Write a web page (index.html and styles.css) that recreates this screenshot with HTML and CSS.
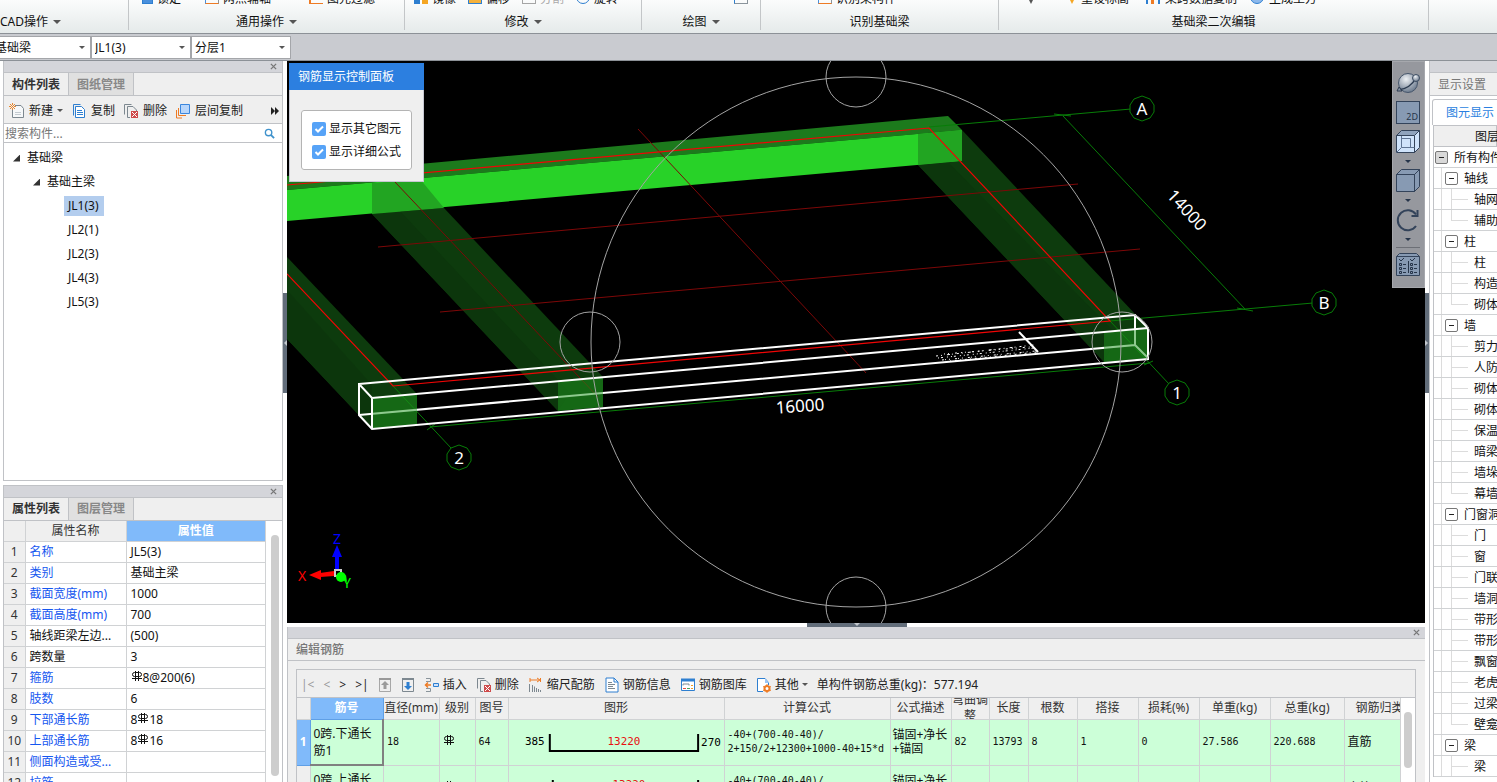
FILE: index.html
```html
<!DOCTYPE html>
<html lang="zh-CN">
<head>
  <meta charset="UTF-8">
  <title>基础梁 - 钢筋三维</title>
  <link rel="stylesheet" href="styles.css">
</head>
<body>
  <!-- 公用图标 -->
  <svg class="defs" aria-hidden="true">
    <symbol id="i-rebar" viewBox="0 0 12 12"><path d="M4.500 1v10M7.500 1v10M1 8.500h10" fill="none" stroke="#111"/><rect x="1.500" y="2.500" width="9" height="4" rx="2" fill="none" stroke="#111"/></symbol>
    <symbol id="i-new" viewBox="0 0 16 16"><path d="M6 2.500h6l2.500 3v9h-11V7" fill="#f6f8f9" stroke="#7d8890"/><path d="M6 9.500h6M6 11.500h6" stroke="#c3cad0"/><path d="M1 1l5 5M6 1L1 6M3.500 0v2M3.500 5v2M0 3.500h2M5 3.500h2" stroke="#e8862c"/></symbol>
    <symbol id="i-copy" viewBox="0 0 16 16"><path d="M2.500 12.500v-11h7" fill="none" stroke="#2e7fd0"/><path d="M4.500 3.500h6l3 3v8h-9z" fill="#fff" stroke="#2e7fd0"/><path d="M6 7.500h5M6 9.500h6M6 11.500h6" stroke="#2e7fd0"/></symbol>
    <symbol id="i-del" viewBox="0 0 16 16"><path d="M1.500 11.500v-10h7" fill="none" stroke="#7d8890"/><path d="M7 14.500H4.500v-11H10l3.500 3.500v1" fill="none" stroke="#7d8890"/><path d="M8 8h7v7H8z" fill="#cf4b4b"/><path d="M9 9l5 5M14 9l-5 5" stroke="#fff"/></symbol>
    <symbol id="i-layer" viewBox="0 0 16 16"><path d="M5.500 1.500h9v9h-9z" fill="#b8d6fb" stroke="#3a86dd"/><path d="M3.500 5v7.500H11M1.500 7v8H7" fill="none" stroke="#ee7b24"/></symbol>
    <symbol id="i-search" viewBox="0 0 12 12"><circle cx="5" cy="5" r="3.500" fill="none" stroke="#3f92cc" stroke-width="1.500"/><path d="M7.500 7.500L11 11" stroke="#3f92cc" stroke-width="2"/></symbol>
    <symbol id="i-x" viewBox="0 0 8 8"><path d="M1 1l6 6M7 1L1 7" stroke="#777" stroke-width="1.500"/></symbol>
    <symbol id="i-up" viewBox="0 0 14 14"><path d="M1.500 1.500h11v12h-11z" fill="none" stroke="#a7a7a7"/><path d="M7 3l4 4H8.500v4h-3V7H3z" fill="#9b9b9b"/><path d="M1 1h12" stroke="#999" stroke-width="2"/></symbol>
    <symbol id="i-down" viewBox="0 0 14 14"><path d="M1.500 1.500h11v12h-11z" fill="none" stroke="#7d8890"/><path d="M7 12l4-4H8.500V4h-3v4H3z" fill="#2e7fd0"/><path d="M1 1h12" stroke="#7d8890" stroke-width="2"/></symbol>
    <symbol id="i-insert" viewBox="0 0 16 16"><path d="M2 1.500h4.500v3H2M2 11.500h4.500v3H2" fill="none" stroke="#8a949b"/><path d="M9.500 6.500h5v3h-5z" fill="#cfe2fb" stroke="#2e7fd0"/><path d="M7 8H2M4 5.500L1.500 8 4 10.500" fill="none" stroke="#ee7b24" stroke-width="1.500"/></symbol>
    <symbol id="i-scale" viewBox="0 0 16 16"><path d="M2 1v4M2 3h9M9 1l3 2-3 2M12.500 1v4" fill="none" stroke="#ee7b24"/><path d="M1.500 7v8M4.500 8v7M6.500 9.500V15M8.500 11v4M10.500 12v3M12.500 13v2" stroke="#7d8890"/></symbol>
    <symbol id="i-info" viewBox="0 0 16 16"><path d="M2 1h8l4 4v10H2z" fill="#fff" stroke="#2e7fd0"/><path d="M10 1v4h4" fill="none" stroke="#2e7fd0"/><path d="M4 5.500h4M4 7.500h7M4 9.500h5M4 11.500h7" stroke="#7d8890"/></symbol>
    <symbol id="i-lib" viewBox="0 0 16 16"><path d="M1.500 2.500h13v11h-13z" fill="#fff" stroke="#2e7fd0"/><path d="M1 3h14" stroke="#2e7fd0" stroke-width="3"/><path d="M3 8.500V7h6v1.500" fill="none" stroke="#7d8890"/><path d="M3 11.500h3" stroke="#e0504a"/><path d="M7 11.500h3" stroke="#46a35a"/><path d="M11 11.500h2M11 8.500h2" stroke="#ee9b24"/></symbol>
    <symbol id="i-other" viewBox="0 0 16 16"><path d="M7 14.500H1.500v-13H9l3.500 4V8" fill="#fff" stroke="#2e7fd0"/><path d="M9 1v5h4" fill="#9cc6f5"/><circle cx="11" cy="11.500" r="2.500" fill="#fff" stroke="#ee7b24" stroke-width="2"/><path d="M11 7v2M11 14v2M7 9.500l2 1M13 12.500l2 1M15 9.500l-2 1M9 12.500l-2 1" stroke="#ee7b24"/></symbol>
  </svg>

  <header class="ribbon">
    <section class="group g-cad">
      <div class="tools"></div>
      <button class="label">CAD操作<i class="caret"></i></button>
    </section>
    <section class="group g-common">
      <div class="tools"><i class="chip blue"></i><span>锁定</span><i class="chip pen push"></i><span>两点辅轴</span><i class="chip lines push2"></i><span>图元过滤</span></div>
      <button class="label">通用操作<i class="caret"></i></button>
    </section>
    <section class="group g-edit">
      <div class="tools"><i class="chip two"></i><span>镜像</span><i class="chip orange"></i><span>偏移</span><i class="chip grey"></i><span class="off">分割</span><i class="chip ring"></i><span>旋转</span></div>
      <button class="label">修改<i class="caret"></i></button>
    </section>
    <section class="group g-draw">
      <div class="tools"><i class="chip line"></i></div>
      <button class="label">绘图<i class="caret"></i></button>
    </section>
    <section class="group g-detect">
      <div class="tools"><i class="chip pen"></i><span>识别梁构件</span></div>
      <div class="label">识别基础梁</div>
    </section>
    <section class="group g-second">
      <div class="tools"><i class="drop dark"></i><i class="drop"></i><span>重设标高</span><i class="chip bars-icon"></i><span>梁跨数据复制</span><i class="chip ring"></i><span>生成土方</span></div>
      <div class="label">基础梁二次编辑</div>
    </section>
  </header>

  <div class="selectors">
    <select aria-label="构件类型"><option>基础梁</option></select>
    <select aria-label="构件名称"><option>JL1(3)</option></select>
    <select aria-label="分层"><option>分层1</option></select>
  </div>

  <main class="work">
    <aside class="left">
      <section class="panel components">
        <div class="strip"><button aria-label="关闭"><svg><use href="#i-x"/></svg></button></div>
        <div class="tabs"><button class="on">构件列表</button><button>图纸管理</button></div>
        <div class="bar">
          <button><svg><use href="#i-new"/></svg>新建<i class="caret small"></i></button>
          <button><svg><use href="#i-copy"/></svg>复制</button>
          <button><svg><use href="#i-del"/></svg>删除</button>
          <button><svg><use href="#i-layer"/></svg>层间复制</button>
          <button class="more" aria-label="更多"><svg viewBox="0 0 8 8"><path d="M0 0l4 4-4 4zM4 0l4 4-4 4z" fill="#222"/></svg></button>
        </div>
        <label class="search"><input type="text" placeholder="搜索构件..." aria-label="搜索构件"><svg><use href="#i-search"/></svg></label>
        <ul class="tree">
          <li><i class="fold"></i>基础梁</li>
          <li class="l1"><i class="fold"></i>基础主梁</li>
          <li class="l2"><a href="#" class="sel">JL1(3)</a></li>
          <li class="l2"><a href="#">JL2(1)</a></li>
          <li class="l2"><a href="#">JL2(3)</a></li>
          <li class="l2"><a href="#">JL4(3)</a></li>
          <li class="l2"><a href="#">JL5(3)</a></li>
        </ul>
      </section>

      <section class="panel props">
        <div class="strip"><button aria-label="关闭"><svg><use href="#i-x"/></svg></button></div>
        <div class="tabs"><button class="on">属性列表</button><button>图层管理</button></div>
        <div class="scroll">
          <table class="prop-table">
            <colgroup><col class="c-no"><col class="c-name"><col></colgroup>
            <tr><th></th><th>属性名称</th><th class="hot">属性值</th></tr>
            <tr><th>1</th><td class="k">名称</td><td>JL5(3)</td></tr>
            <tr><th>2</th><td class="k">类别</td><td>基础主梁</td></tr>
            <tr><th>3</th><td class="k">截面宽度(mm)</td><td>1000</td></tr>
            <tr><th>4</th><td class="k">截面高度(mm)</td><td>700</td></tr>
            <tr><th>5</th><td>轴线距梁左边...</td><td>(500)</td></tr>
            <tr><th>6</th><td>跨数量</td><td>3</td></tr>
            <tr><th>7</th><td class="k">箍筋</td><td><svg class="rebar"><use href="#i-rebar"/></svg>8@200(6)</td></tr>
            <tr><th>8</th><td class="k">肢数</td><td>6</td></tr>
            <tr><th>9</th><td class="k">下部通长筋</td><td>8<svg class="rebar"><use href="#i-rebar"/></svg>18</td></tr>
            <tr><th>10</th><td class="k">上部通长筋</td><td>8<svg class="rebar"><use href="#i-rebar"/></svg>16</td></tr>
            <tr><th>11</th><td class="k">侧面构造或受...</td><td></td></tr>
            <tr><th>12</th><td class="k">拉筋</td><td></td></tr>
          </table>
          <div class="track"><div class="thumb"></div></div>
        </div>
      </section>
    </aside>

    <div class="center">
      <section class="viewport">
        <svg class="scene" viewBox="287 61 1138 562" preserveAspectRatio="xMinYMin slice">
          <!-- 上部梁 -->
          <path d="M287 176L948 116L962 130L287 190z" fill="#1c7a1c"/>
          <path d="M287 190L962 130V161L287 221z" fill="#28d228"/>
          <!-- 横向梁 -->
          <path d="M918 165L962 161V130L1136 315L1148 328V358L1104 362z" fill="#0d3b0d"/>
          <path d="M918 165L948 162L1118 336L1104 362z" fill="#0c360c"/>
          <path d="M918 134L962 130V161L918 165z" fill="#22a522"/>
          <path d="M372 214L444 208L603 377V407L558 411z" fill="#0d3b0d"/>
          <path d="M372 214L400 211L570 393L558 411z" fill="#0c360c"/>
          <path d="M372 183L420 179L444 208L372 214z" fill="#22a522"/>
          <path d="M287 257L417 394V424L372 429L287 339z" fill="#0d3b0d"/>
          <path d="M287 290L372 385V429L287 339z" fill="#0c360c"/>
          <!-- 轴线与标注 -->
          <g fill="none" stroke="#087d08">
            <path d="M929 127L1131 109M1110 321L1313 303M1063 116L1245 309M1054 114L1071 116M1237 308L1253 311"/>
            <path d="M1110 321L1169 384M393 386L451 448M430 427L1149 363M427 430L435 424M1144 365L1153 361"/>
          </g>
          <path d="M378 247L1078 184M440 312L1140 249M638 129L866 373M395 182L598 397" fill="none" stroke="#7d0808"/>
          <path d="M287 185L929 128L1110 321L393 386L287 274" fill="none" stroke="#f00505" stroke-width="1.200"/>
          <!-- 选中梁 -->
          <path d="M359 415L1135 345V315M1135 345L1148 358" fill="none" stroke="#fff" stroke-width="2"/>
          <path d="M372 398L417 394V424L372 429zM558 382L603 377V407L558 411zM1104 333L1148 328V358L1104 362z" fill="#1e961e" opacity="0.5"/>
          <path d="M359 384L1135 315L1148 328V359L372 429L359 415zL372 398L1148 328M372 398V429" fill="none" stroke="#fff" stroke-width="2"/>
          <path d="M1019 332L1038 352" stroke="#fff" stroke-width="2"/>
          <g stroke="#fff" fill="none">
            <path d="M936 356L1034 345" stroke-dasharray="2 3 1 5 3 2 1 4"/>
            <path d="M938 358L1034 348" stroke-dasharray="1 2 2 4 1 3"/>
            <path d="M944 354L1030 347" stroke-dasharray="1 3 1 6 2 4"/>
            <path d="M942 360L1036 351" stroke-dasharray="2 1 1 3 1 5"/>
            <path d="M950 361L1038 352" stroke-dasharray="1 4 2 3"/>
          </g>
          <!-- 动态观察圈 -->
          <g fill="none" stroke="#a4a4a4">
            <circle cx="856" cy="342" r="265"/><circle cx="590" cy="342" r="30"/><circle cx="1122" cy="342" r="30"/><circle cx="856" cy="77" r="30"/><circle cx="856" cy="607" r="30"/>
          </g>
          <g fill="#000" stroke="#087d08">
            <path id="knob" d="M1142 96l8 3 4 6v7l-4 6-8 3-8-3-4-6v-7l4-6z"/>
            <use href="#knob" x="182" y="194"/><use href="#knob" x="35" y="284"/><use href="#knob" x="-683" y="349"/>
          </g>
          <g class="marks">
            <text x="1142" y="115">A</text><text x="1324" y="309">B</text><text x="1177" y="399">1</text><text x="459" y="464">2</text>
            <text x="800" y="412" transform="rotate(-4 800 406)">16000</text>
            <text x="1187" y="216" transform="rotate(47 1187 210)">14000</text>
          </g>
          <!-- 坐标轴 -->
          <path d="M335 556h4v14h-4zM332 557l5-12 5 12z" fill="#00f"/>
          <path d="M334 571v5l-14 1v-4zM321 570v10l-12-5z" fill="#f00"/>
          <path d="M335 570h6v6h-6z" fill="none" stroke="#ccc" stroke-width="2"/>
          <circle cx="341" cy="577" r="5" fill="#0f0"/><path d="M342 579l5 3-1-7z" fill="#0f0"/>
          <g class="axis"><text x="337" y="544" fill="#00f">Z</text><text x="302" y="581" fill="#f00">X</text><text x="347" y="588" fill="#0f0">Y</text></g>
        </svg>

        <div class="dialog">
          <h2>钢筋显示控制面板</h2>
          <fieldset>
            <label><input type="checkbox" checked>显示其它图元</label>
            <label><input type="checkbox" checked>显示详细公式</label>
          </fieldset>
        </div>

        <nav class="viewbar">
          <button aria-label="动态观察"><svg viewBox="0 0 24 24"><defs><radialGradient id="ball" cx="0.400" cy="0.300" r="0.800"><stop offset="0" stop-color="#eef1f4"/><stop offset="1" stop-color="#5b6b80"/></radialGradient></defs><circle cx="12" cy="12" r="9.500" fill="url(#ball)" stroke="#46566b"/><path d="M2 19Q14 18 20 7" fill="none" stroke="#2c3b50" stroke-width="1.500"/><circle cx="20" cy="7" r="3.500" fill="url(#ball)" stroke="#3d4d62"/><path d="M1 20l2-4 3 4z" fill="#8b98a8" stroke="#2c3b50"/></svg></button>
          <button><span class="two-d">2D</span></button>
          <button aria-label="线框"><svg viewBox="0 0 24 24"><path d="M.5 5.500h18v17H.5z" fill="#cfe3fb" stroke="#33435a"/><path d="M.5 5.500L5.500.5h18l-5 5z" fill="#8fa3bd" stroke="#33435a"/><path d="M18.500 5.500l5-5v17l-5 5z" fill="#cfe3fb" stroke="#33435a"/><path d="M5.500 6v11.500h13M.5 22.500l5-5M5.500 8.500h9v9" fill="none" stroke="#5f7594"/></svg></button>
          <i class="caret view"></i>
          <button aria-label="实体"><svg viewBox="0 0 24 24"><path d="M.5 5.500h18v17H.5zM.5 5.500L5.500.5h18l-5 5zM18.500 5.500l5-5v17l-5 5z" fill="#879ab3" stroke="#33435a"/></svg></button>
          <i class="caret view"></i>
          <button aria-label="旋转"><svg viewBox="0 0 24 24"><path d="M20 6.500A10 10 0 1 0 20 18" fill="none" stroke="#33435a" stroke-width="2"/><path d="M21.500 2v6h-6" fill="none" stroke="#33435a" stroke-width="2"/></svg></button>
          <i class="caret view"></i>
          <hr>
          <button aria-label="显示设置"><svg viewBox="0 0 24 24"><path d="M.5 4.500h23v19H.5zM.5 4.500L3.500 1.500h17l3 3" fill="#879ab3" stroke="#33435a"/><path d="M3 7l2 2 3-3M14 7l2 2 3-3M12.500 9v12M7 12.500h3M7 16.500h3M7 20.500h3M18 12.500h3M18 16.500h3M18 20.500h3M3.500 11.500h2v2h-2zM3.500 15.500h2v2h-2zM3.500 19.500h2v2h-2zM14.500 11.500h2v2h-2zM14.500 15.500h2v2h-2zM14.500 19.500h2v2h-2z" fill="none" stroke="#26354a"/></svg></button>
        </nav>
        <i class="grip left-grip"></i><i class="grip right-grip"></i><i class="grip bottom-grip"></i>
      </section>

      <section class="rebar-panel">
        <div class="strip"><button aria-label="关闭"><svg><use href="#i-x"/></svg></button></div>
        <h2>编辑钢筋</h2>
        <div class="sheet">
          <div class="bar">
            <div class="pager"><button class="off">|&lt;</button><button class="off">&lt;</button><button>&gt;</button><button>&gt;|</button></div>
            <button aria-label="上移"><svg class="s14"><use href="#i-up"/></svg></button>
            <button aria-label="下移"><svg class="s14"><use href="#i-down"/></svg></button>
            <button><svg><use href="#i-insert"/></svg>插入</button>
            <button><svg><use href="#i-del"/></svg>删除</button>
            <button><svg><use href="#i-scale"/></svg>缩尺配筋</button>
            <button><svg><use href="#i-info"/></svg>钢筋信息</button>
            <button><svg><use href="#i-lib"/></svg>钢筋图库</button>
            <button><svg><use href="#i-other"/></svg>其他<i class="caret small"></i></button>
            <span class="sum">单构件钢筋总重(kg)：577.194</span>
          </div>
          <div class="scroll">
            <table class="bars">
              <colgroup><col class="w14"><col class="w73"><col class="w56"><col class="w36"><col class="w33"><col class="w216"><col class="w166"><col class="w61"><col class="w38"><col class="w39"><col class="w49"><col class="w61"><col class="w61"><col class="w71"><col class="w74"><col></colgroup>
              <tr class="head"><th></th><th class="hot">筋号</th><th>直径(mm)</th><th>级别</th><th>图号</th><th>图形</th><th>计算公式</th><th>公式描述</th><th><div class="clip">弯曲调整</div></th><th>长度</th><th>根数</th><th>搭接</th><th>损耗(%)</th><th>单重(kg)</th><th>总重(kg)</th><th class="last">钢筋归类</th></tr>
              <tr>
                <th class="hot">1</th><td class="name cur">0跨.下通长筋1</td><td class="m">18</td><td><svg class="rebar"><use href="#i-rebar"/></svg></td><td class="m">64</td>
                <td class="fig"><svg viewBox="0 0 216 44"><path d="M41 14v17h149V14" fill="none" stroke="#000" stroke-width="2"/><text x="16" y="25">385</text><text x="99" y="25" class="red">13220</text><text x="193" y="26">270</text></svg></td>
                <td class="m">-40+(700-40-40)/<br>2+150/2+12300+1000-40+15*d</td><td class="desc">锚固+净长+锚固</td><td class="m">82</td><td class="m">13793</td><td class="m">8</td><td class="m">1</td><td class="m">0</td><td class="m">27.586</td><td class="m">220.688</td><td>直筋</td>
              </tr>
              <tr>
                <th>2</th><td class="name">0跨.上通长筋1</td><td class="m">16</td><td><svg class="rebar"><use href="#i-rebar"/></svg></td><td class="m">64</td>
                <td class="fig"><svg viewBox="0 0 216 44"><path d="M44 14v17h146V14" fill="none" stroke="#000" stroke-width="2"/><text x="16" y="26">240</text><text x="104" y="22" class="red">13220</text><text x="193" y="27">240</text></svg></td>
                <td class="m">-40+(700-40-40)/<br>2+12300+1000-40+15*d</td><td class="desc">锚固+净长+锚固</td><td class="m">73</td><td class="m">13627</td><td class="m">8</td><td class="m">1</td><td class="m">0</td><td class="m">21.531</td><td class="m">172.248</td><td>直筋</td>
              </tr>
            </table>
            <div class="track"><div class="thumb"></div></div>
          </div>
        </div>
      </section>
    </div>

    <aside class="right">
      <div class="strip"></div>
      <h2>显示设置</h2>
      <div class="view-tabs"><button>图元显示</button></div>
      <div class="layers">
        <div class="layers-head">图层</div>
        <ul>
          <li class="r0"><button class="first" aria-label="折叠所有构件"></button>所有构件</li>
          <li class="r1"><button aria-label="折叠轴线"></button>轴线</li><li>轴网</li><li class="end">辅助轴线</li>
          <li class="r1"><button aria-label="折叠柱"></button>柱</li><li>柱</li><li>构造柱</li><li class="end">砌体柱</li>
          <li class="r1"><button aria-label="折叠墙"></button>墙</li><li>剪力墙</li><li>人防门框墙</li><li>砌体墙</li><li>砌体加筋</li><li>保温墙</li><li>暗梁</li><li>墙垛</li><li class="end">幕墙</li>
          <li class="r1"><button aria-label="折叠门窗洞"></button>门窗洞</li><li>门</li><li>窗</li><li>门联窗</li><li>墙洞</li><li>带形窗</li><li>带形洞</li><li>飘窗</li><li>老虎窗</li><li>过梁</li><li class="end">壁龛</li>
          <li class="r1"><button aria-label="折叠梁"></button>梁</li><li>梁</li>
        </ul>
      </div>
    </aside>
  </main>
</body>
</html>
```
FILE: styles.css
```css
* {
  box-sizing: border-box;
}
body {
  margin: 0;
  height: 100vh;
  display: flex;
  flex-direction: column;
  overflow: hidden;
  background: #fff;
  color: #111;
  font: 12px/16px "Noto Sans", "Noto Sans CJK SC", sans-serif;
  white-space: nowrap;
}
button {
  padding: 0;
  border: 0;
  background: none;
  font: inherit;
  color: inherit;
}
ul {
  list-style: none;
  margin: 0;
  padding: 0;
}
h2 {
  margin: 0;
  font-size: 12px;
  line-height: 16px;
  font-weight: normal;
}
.defs {
  position: absolute;
  width: 0;
  height: 0;
}
.caret {
  border: 4px solid transparent;
  border-top-color: #555;
  border-bottom: 0;
}
.caret.small {
  border-width: 3px 3px 0;
}

/* 功能区 */
.ribbon {
  flex: none;
  display: flex;
  height: 34px;
  background: linear-gradient(#fbfcfc, #e5eaea);
  border-bottom: 1px solid #8c9197;
}
.group {
  flex: none;
  display: flex;
  flex-direction: column;
  align-items: center;
  border-right: 1px solid #c3c6c8;
  margin-bottom: 3px;
}
.g-cad { width: 129px; align-items: flex-start; }
.g-common { width: 276px; }
.g-edit { width: 237px; }
.g-draw { width: 119px; }
.g-detect { width: 238px; }
.g-second { width: 430px; }
.tools {
  flex: none;
  width: 100%;
  height: 7px;
  margin-bottom: 7px;
  overflow: hidden;
  display: flex;
  align-items: flex-end;
  gap: 4px;
}
.tools span {
  line-height: 16px;
}
.tools .off {
  color: #aaa;
}
.label {
  display: flex;
  align-items: center;
  gap: 5px;
  line-height: 16px;
}
.g-common .tools { padding-left: 13px; }
.g-edit .tools { padding-left: 9px; }
.g-draw .tools { padding-left: 92px; }
.g-detect .tools { padding-left: 57px; }
.g-second .tools { padding-left: 28px; gap: 5px; }
.chip {
  flex: none;
  width: 14px;
  height: 14px;
  margin-bottom: 3px;
  border: 1px solid #2e7fd0;
}
.chip.blue { width: 11px; background: #4a90dd; }
.chip.push { margin-left: 20px; }
.chip.push2 { margin-left: 34px; }
.chip.pen { border-color: #ee7b24 #8a949b #ee7b24 #4a90dd; }
.chip.lines { border-color: #ee7b24; border-width: 0 0 1px 2px; }
.chip.two { background: linear-gradient(90deg, #2e7fd0 45%, #fff 45% 60%, #f5a623 60%); border: 0; }
.chip.orange { background: #f5b13c; margin-left: 8px; }
.chip.grey { border-color: #a5a5a5; margin-left: 8px; }
.g-edit .ring { margin-left: 8px; }
.chip.ring { border-radius: 50%; }
.chip.line { border-color: #8a949b; border-left-color: #2e7fd0; }
.chip.bars-icon { margin-left: 12px; border-width: 0 2px; background: linear-gradient(90deg, transparent 35%, #ee7b24 35% 65%, transparent 65%); }
.g-second .ring { margin-left: 8px; background: #8db9ec; }
.drop {
  width: 8px;
  height: 8px;
  margin-bottom: 3px;
  background: #f5a623;
  clip-path: polygon(0 0, 100% 0, 50% 100%);
}
.drop.dark {
  background: #555;
  margin-right: 28px;
}

.selectors {
  flex: none;
  display: flex;
  align-items: center;
  height: 27px;
  background: #c9cbd0;
  border-bottom: 1px solid #8c9197;
}
.selectors select {
  appearance: none;
  width: 100px;
  height: 23px;
  padding: 1px 3px 0;
  border: 1px solid #a4a6aa;
  border-radius: 0;
  color: #111;
  font: inherit;
  background: #fff url("data:image/svg+xml,%3Csvg xmlns='http://www.w3.org/2000/svg' width='6' height='3'%3E%3Cpath d='M0 0h6L3 3z' fill='%23555'/%3E%3C/svg%3E") no-repeat right 5px center;
}
.selectors select:first-child {
  margin-left: -9px;
}

.work {
  flex: 1;
  min-height: 0;
  display: flex;
}

/* 左侧 */
.left {
  flex: none;
  width: 287px;
  padding: 0 4px 0 3px;
  display: flex;
  flex-direction: column;
  gap: 4px;
}
.panel {
  display: flex;
  flex-direction: column;
  min-height: 0;
  overflow: hidden;
  background: #fff;
  border: 1px solid #c0c2c6;
}
.components { flex: 420 1 0; border-top: 0; }
.props { flex: 297 1 0; border-bottom: 0; }
.strip {
  flex: none;
  display: flex;
  justify-content: flex-end;
  align-items: center;
  height: 12px;
  padding-right: 5px;
  background: #d4d5da;
  border-bottom: 1px solid #c0c2c6;
}
.strip button {
  display: flex;
}
.strip svg {
  width: 7px;
  height: 7px;
}
.tabs {
  flex: none;
  display: flex;
  height: 23px;
  background: #efefef;
  border-bottom: 1px solid #c0c2c6;
}
.tabs button {
  width: 65px;
  border-right: 1px solid #c0c2c6;
  background: #e0e0e0;
  color: #888;
  font-weight: bold;
}
.tabs .on {
  background: #efefef;
  color: #333;
}
.components .tabs button {
  padding-top: 2px;
}
.bar {
  flex: none;
  display: flex;
  align-items: center;
  height: 28px;
  padding-top: 2px;
  background: #efefef;
  border-bottom: 1px solid #c0c2c6;
  color: #222;
}
.bar button {
  display: flex;
  align-items: center;
  gap: 3px;
}
.bar svg {
  width: 16px;
  height: 16px;
}
.components .bar {
  padding-left: 5px;
  padding-right: 3px;
  gap: 8px;
}
.components .bar button {
  gap: 4px;
}
.components .more {
  margin-left: auto;
}
.components .more svg {
  width: 8px;
  height: 8px;
}
.search {
  flex: none;
  display: flex;
  align-items: center;
  height: 19px;
  padding: 1px 7px 0 1px;
  border-bottom: 1px solid #c0c2c6;
}
.search input {
  flex: 1;
  min-width: 0;
  padding: 0;
  border: 0;
  outline: 0;
  font: inherit;
}
.search input::placeholder {
  color: #777;
}
.search svg {
  width: 11px;
  height: 11px;
}
.tree {
  padding: 3px 0 0 9px;
}
.tree li {
  display: flex;
  align-items: center;
  height: 24px;
  gap: 7px;
}
.tree .l1 { padding-left: 20px; }
.tree .l2 { padding-left: 51px; }
.tree a {
  padding: 0 5px 0 4px;
  line-height: 20px;
  color: #111;
  text-decoration: none;
}
.tree .sel {
  background: #b3cdee;
}
.fold {
  width: 7px;
  height: 7px;
  background: #333;
  clip-path: polygon(100% 0, 100% 100%, 0 100%);
}
.scroll {
  flex: 1;
  min-height: 0;
  display: flex;
  overflow: hidden;
}
.track {
  flex: none;
  background: #fff;
}
.thumb {
  background: #cdcdcd;
  border-radius: 4px;
}
.props .track {
  width: 16px;
  padding: 14px 3px 6px 5px;
}
.props .thumb {
  height: 100%;
}
table {
  flex: 1;
  width: 0;
  table-layout: fixed;
  border-collapse: collapse;
}
th {
  background: #efefef;
  font-weight: normal;
  color: #333;
}
th, td {
  padding: 0 3px;
  border: 1px solid #d0d2d4;
  border-top: 0;
  border-left: 0;
  overflow: hidden;
}
.hot {
  background: #80bafa;
  color: #fff;
  font-weight: bold;
}
.prop-table {
  align-self: flex-start;
}
.prop-table th,
.prop-table td {
  height: 21px;
  padding-left: 4px;
}
.prop-table th {
  padding: 0;
}
.c-no { width: 21px; }
.c-name { width: 101px; }
.k { color: #1557f0; }
.rebar {
  width: 12px;
  height: 12px;
}

/* 三维视图 */
.center {
  flex: 1;
  min-width: 0;
  display: flex;
  flex-direction: column;
  gap: 4px;
}
.viewport {
  position: relative;
  flex: 562 1 0;
  min-height: 0;
  background: #000;
}
.scene {
  display: block;
  width: 100%;
  height: 100%;
}
.marks {
  font: 17px "Noto Sans", sans-serif;
  fill: #fff;
  text-anchor: middle;
}
.axis {
  font: 14px "Noto Sans", sans-serif;
  text-anchor: middle;
}
.dialog {
  position: absolute;
  left: 2px;
  top: 2px;
  width: 135px;
  background: #efefef;
  border: 1px solid #c6c8d2;
  border-top: 0;
}
.dialog h2 {
  margin: 0 -1px;
  padding: 0 9px;
  line-height: 27px;
  background: #2c7fe0;
  color: #fff;
}
.dialog fieldset {
  margin: 20px 11px 11px;
  padding: 6px 10px;
  border: 1px solid #b4b4b4;
  border-radius: 3px;
  background: #fff;
}
.dialog label {
  display: flex;
  align-items: center;
  gap: 3px;
  height: 23px;
}
.dialog input {
  appearance: none;
  width: 14px;
  height: 14px;
  margin: 0;
  border-radius: 2px;
  background: #57a3f7 url("data:image/svg+xml,%3Csvg xmlns='http://www.w3.org/2000/svg' width='14' height='14'%3E%3Cpath d='M3.500 7l2.500 2.500L11 4.500' fill='none' stroke='%23fff' stroke-width='2'/%3E%3C/svg%3E");
}
.viewbar {
  position: absolute;
  right: 0;
  top: 0;
  width: 33px;
  padding: 9px 1px 11px 0;
  display: flex;
  flex-direction: column;
  align-items: center;
  gap: 6px;
  background: #96989e;
  border: 1px solid #a6a8ad;
}
.viewbar button {
  display: flex;
}
.viewbar svg {
  width: 24px;
  height: 24px;
}
.two-d {
  width: 24px;
  height: 23px;
  padding: 7px 1px 0 0;
  border: 1px solid #33435a;
  background: #879ab3;
  color: #26354a;
  font-size: 9px;
  line-height: 16px;
  text-align: right;
}
.caret.view {
  border-width: 3px 3px 0;
  border-top-color: #26354a;
}
.viewbar hr {
  width: 24px;
  margin: 0 0 -2px;
  border: 0;
  border-top: 1px solid #6c6f76;
}
.grip {
  position: absolute;
  background: #626d7a;
}
.grip::after {
  content: "";
  position: absolute;
  background: #c3c8ce;
}
.left-grip, .right-grip {
  width: 4px;
  height: 100px;
  top: calc(50% - 49px);
}
.left-grip { left: -4px; }
.right-grip { right: -4px; }
.left-grip::after, .right-grip::after {
  width: 3px;
  height: 6px;
  top: 47px;
  left: 1px;
  clip-path: polygon(100% 0, 100% 100%, 0 50%);
}
.right-grip::after {
  left: 0;
  clip-path: polygon(0 0, 100% 50%, 0 100%);
}
.bottom-grip {
  width: 100px;
  height: 4px;
  left: calc(50% - 49px);
  bottom: -4px;
}
.bottom-grip::after {
  width: 6px;
  height: 3px;
  left: 47px;
  clip-path: polygon(0 0, 100% 0, 50% 100%);
}

/* 编辑钢筋 */
.rebar-panel {
  flex: 155 1 0;
  min-height: 0;
  display: flex;
  flex-direction: column;
  background: #efefef;
  border-left: 1px solid #c0c2c6;
  overflow: hidden;
}
.rebar-panel h2 {
  flex: none;
  padding: 3px 8px 2px;
  border-bottom: 1px solid #c0c2c6;
  color: #777;
  font-weight: 500;
}
.sheet {
  flex: 1;
  min-height: 0;
  display: flex;
  flex-direction: column;
  margin: 8px 9px 0 8px;
  border: 1px solid #c0c2c6;
  border-bottom: 0;
}
.sheet .bar {
  padding-left: 4px;
  gap: 9px;
}
.sheet .s14 {
  width: 14px;
  height: 14px;
}
.pager {
  display: flex;
  gap: 9px;
}
.pager .off {
  color: #999;
}
.bars {
  align-self: flex-start;
}
.bars th {
  padding: 0;
}
.bars .hot {
  border-color: #5f9fe6;
}
.bars .head th {
  height: 21px;
}
.bars tr {
  height: 46px;
}
.bars .head {
  height: 21px;
}
.bars td {
  background: #ccffd8;
}
.bars .m {
  padding: 0 2px 0 3px;
  font: 10px/14px "DejaVu Sans Mono", monospace;
}
.bars .name {
  white-space: normal;
  line-height: 17px;
}
.bars .cur {
  border-right: 2px solid #808080;
  border-bottom: 2px solid #808080;
}
.bars .desc {
  padding: 0 2px;
  line-height: 14px;
  white-space: normal;
  word-break: break-all;
}
.bars .fig {
  padding: 0;
}
.fig svg {
  display: block;
  width: 100%;
  height: 44px;
}
.fig text {
  font: 11px "DejaVu Sans Mono", monospace;
}
.fig .red {
  fill: #e81010;
}
.clip {
  height: 20px;
  line-height: 16px;
  white-space: normal;
  display: flex;
  align-items: center;
}
.bars .last {
  text-align: left;
  padding-left: 11px;
}
.w14 { width: 13px; }
.w73 { width: 73px; }
.w56 { width: 56px; }
.w36 { width: 36px; }
.w33 { width: 33px; }
.w216 { width: 216px; }
.w166 { width: 166px; }
.w61 { width: 61px; }
.w38 { width: 38px; }
.w39 { width: 39px; }
.w49 { width: 49px; }
.w71 { width: 71px; }
.w74 { width: 74px; }
.sheet .track {
  width: 14px;
  padding: 14px 3px 0;
}
.sheet .thumb {
  height: 56px;
}

/* 右侧显示设置 */
.right {
  flex: none;
  width: 72px;
  padding-left: 4px;
  overflow: hidden;
  display: flex;
  flex-direction: column;
}
.right > * {
  border-left: 1px solid #c0c2c6;
}
.right h2 {
  padding: 4px 0 2px 8px;
  background: #efefef;
  border-bottom: 1px solid #c0c2c6;
  color: #777;
}
.view-tabs {
  padding: 3px 0 0 2px;
}
.view-tabs button {
  height: 26px;
  padding: 0 13px;
  border: 1px solid #c0c2c6;
  border-bottom: 0;
  border-radius: 3px 0 0;
  color: #2a7fe0;
}
.layers {
  flex: 1;
  min-height: 0;
  padding-left: 3px;
}
.layers-head {
  height: 22px;
  padding-left: 41px;
  line-height: 22px;
  background: #efefef;
  border: 1px solid #c0c2c6;
}
.layers ul {
  border-left: 1px solid #c0c2c6;
}
.layers li {
  display: flex;
  align-items: center;
  height: 21px;
  padding: 1px 0 0 40px;
  border-bottom: 1px solid #d0d2d4;
  background:
    linear-gradient(#dcdcdc, #dcdcdc) 7px 0 / 1px 100% no-repeat,
    linear-gradient(#dcdcdc, #dcdcdc) 17px 0 / 1px 100% no-repeat,
    linear-gradient(#dcdcdc, #dcdcdc) 17px 50% / 17px 1px no-repeat;
}
.layers .end {
  background:
    linear-gradient(#dcdcdc, #dcdcdc) 7px 0 / 1px 100% no-repeat,
    linear-gradient(#dcdcdc, #dcdcdc) 17px 0 / 1px 50% no-repeat,
    linear-gradient(#dcdcdc, #dcdcdc) 17px 50% / 17px 1px no-repeat;
}
.layers .r0 {
  padding-left: 1px;
  gap: 6px;
  background: none;
}
.layers .r1 {
  padding-left: 11px;
  gap: 6px;
  background: linear-gradient(#dcdcdc, #dcdcdc) 7px 0 / 1px 100% no-repeat;
}
.layers button {
  flex: none;
  width: 13px;
  height: 13px;
  border: 1px solid #777;
  border-radius: 2px;
  background: #fff linear-gradient(#222, #222) center / 5px 1px no-repeat;
}
.layers .first {
  background-color: #d8d8d8;
}
```
